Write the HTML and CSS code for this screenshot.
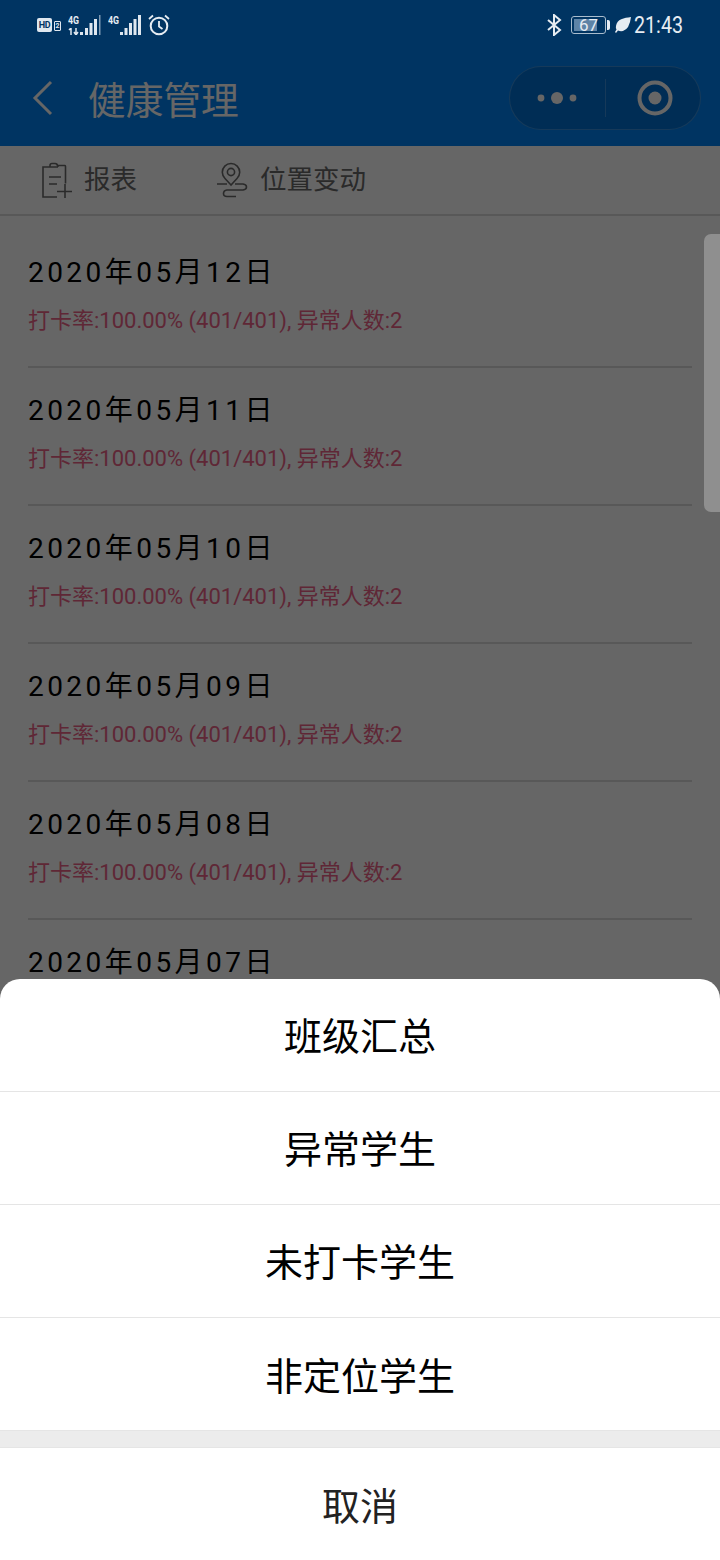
FILE: index.html
```html
<!DOCTYPE html>
<html lang="zh-CN">
<head>
<meta charset="utf-8">
<title>健康管理</title>
<link rel="stylesheet" href="styles.css">
</head>
<body>
<div class="page">
  <header class="nav">
    <svg class="back" width="24" height="36" viewBox="0 0 24 36"><path d="M20 2 4 18l16 16" fill="none" stroke="#fff" stroke-width="3"/></svg>
    <h1 class="title">健康管理</h1>
    <div class="capsule">
      <svg class="more" width="40" height="14" viewBox="0 0 40 14"><circle cx="4" cy="7" r="3.4" fill="#fff"/><circle cx="20" cy="7" r="6" fill="#fff"/><circle cx="36" cy="7" r="3.4" fill="#fff"/></svg>
      <span class="capsule-sep"></span>
      <svg class="target" width="36" height="36" viewBox="0 0 36 36"><circle cx="18" cy="18" r="15.5" fill="none" stroke="#fff" stroke-width="4"/><circle cx="18" cy="18" r="6.5" fill="#fff"/></svg>
    </div>
  </header>

  <nav class="tools">
    <div class="tool tool-report">
      <svg width="32" height="36" viewBox="0 0 32 36" fill="none" stroke="#6a6a6a" stroke-width="1.6">
        <path d="M9 5H2v30h14M9 5V3.500q0-2 2-2h2.500q1.500 0 2 .5l1 1.500h7.500q.5 0 .5 1v17M13.500 1.500q3-.5 3.500 3.500M9 5h8"/>
        <path d="M8 15h12M8 22h8M16 29.500h15M24 22v14"/>
      </svg>
      <span>报表</span>
    </div>
    <div class="tool tool-move">
      <svg width="32" height="36" viewBox="0 0 32 36" fill="none" stroke="#6a6a6a" stroke-width="1.6">
        <path d="M14 23 8 16.500a8.700 8.700 0 1 1 12 0Z"/>
        <circle cx="14" cy="10" r="3.600"/>
        <path d="M0 22h10M18 22h8q3.500.5 3.500 3t-3.500 3H10q-3.500.5-3.500 3.500t3.500 3h9"/>
      </svg>
      <span>位置变动</span>
    </div>
  </nav>

  <main class="list">
    <section class="row"><div class="date">2020年05月12日</div><div class="stat">打卡率:100.00% (401/401), 异常人数:2</div></section>
    <section class="row"><div class="date">2020年05月11日</div><div class="stat">打卡率:100.00% (401/401), 异常人数:2</div></section>
    <section class="row"><div class="date">2020年05月10日</div><div class="stat">打卡率:100.00% (401/401), 异常人数:2</div></section>
    <section class="row"><div class="date">2020年05月09日</div><div class="stat">打卡率:100.00% (401/401), 异常人数:2</div></section>
    <section class="row"><div class="date">2020年05月08日</div><div class="stat">打卡率:100.00% (401/401), 异常人数:2</div></section>
    <section class="row"><div class="date">2020年05月07日</div></section>
  </main>

  <div class="mask"></div>
  <div class="scroll-thumb"></div>

  <div class="status">
    <div class="status-left">
      <div class="hd">HD</div>
      <div class="sim">2</div>
      <div class="net">
        <span class="net-label">4G</span>
        <svg class="arrows" width="11" height="7" viewBox="0 0 11 7"><path d="M3 0v7M1 2l2-2M8 0v7M6 4l2 3 2-3" fill="none" stroke="#dfe7ef" stroke-width="1.500"/></svg>
      </div>
      <svg class="bars" width="22" height="20" viewBox="0 0 22 20"><path d="M1 17h3v3H1zM6 13h3v7H6zM10.500 8h3v12h-3zM15 4h3v16h-3z" fill="#dfe7ef"/><rect x="20" y="0" width="1.500" height="20" fill="#7f9ab3"/></svg>
      <span class="net-label net-two">4G</span>
      <svg class="bars-two" width="21" height="20" viewBox="0 0 21 20"><path d="M0 17h3v3H0zM4.500 13h3v7h-3zM9 8h3v12H9zM13.500 4h3v16h-3zM18 0h3v20h-3z" fill="#dfe7ef"/></svg>
      <svg class="alarm" width="22" height="22" viewBox="0 0 22 22" fill="none" stroke="#e6ecf2"><circle cx="11" cy="12" r="8.300" stroke-width="2"/><path d="M11 7v5.500l3.500 2.500" stroke-width="1.800"/><path d="M1 5l4-3.500M21 5l-4-3.500" stroke-width="1.800"/></svg>
    </div>
    <div class="status-right">
      <svg width="15" height="22" viewBox="0 0 15 22" fill="none" stroke="#e6ecf2" stroke-width="2"><path d="M1 6l12 10-6 5V1l6 5L1 16"/></svg>
      <div class="battery"><span class="battery-fill"></span><span class="battery-num">67</span></div>
      <span class="battery-nub"></span>
      <svg class="leaf" width="16" height="16" viewBox="0 0 16 16"><path d="M16 0C9 1 2 2 1 9q-.5 2 .5 3.500L0 15l1 1 2-2.500Q5 14.500 8 14 14.500 12 16 0Z" fill="#e6ecf2"/></svg>
      <span class="clock">21:43</span>
    </div>
  </div>

  <div class="sheet">
    <div class="sheet-item">班级汇总</div>
    <div class="sheet-item">异常学生</div>
    <div class="sheet-item">未打卡学生</div>
    <div class="sheet-item sheet-item-last">非定位学生</div>
    <div class="sheet-gap"></div>
    <div class="sheet-cancel">取消</div>
  </div>
</div>
</body>
</html>
```

FILE: styles.css
```css
* { box-sizing: border-box; margin: 0; padding: 0; }
html, body { width: 720px; height: 1560px; overflow: hidden; background: #fff; }
body { font-family: Roboto, "Noto Sans CJK SC", sans-serif; color: #000; }
.page { position: relative; width: 720px; height: 1560px; overflow: hidden; display: flex; flex-direction: column; }

.nav { flex: none; height: 146px; background: #0082f5; display: flex; align-items: center; padding: 50px 19px 0 31px; color: #fff; }
.back { flex: none; }
.title { flex: 1; font-size: 37.7px; font-weight: 400; line-height: 50px; margin: 6px 0 0 33px; color: #fff; }
.capsule { flex: none; width: 192px; height: 64px; border-radius: 32px; background: rgba(0,0,0,.13); border: 1px solid rgba(255,255,255,.22); display: flex; align-items: center; }
.more { flex: none; margin-left: 27px; }
.capsule-sep { flex: none; width: 1px; height: 38px; margin-left: 28px; background: rgba(255,255,255,.22); }
.target { flex: none; margin-left: 31px; }

.tools { flex: none; height: 70px; display: flex; align-items: center; border-bottom: 2px solid #ddd; padding-left: 41px; color: #6a6a6a; font-size: 26.5px; }
.tool { display: flex; align-items: center; }
.tool span { line-height: 36px; margin-bottom: 1px; }
.tool-report svg { margin-right: 11px; }
.tool-move { margin-left: 80px; }
.tool-move svg { margin-right: 11px; }

.list { flex: 1; overflow: hidden; padding-top: 14px; }
.row { height: 138px; margin: 0 28px; padding-top: 24px; border-bottom: 2px solid #ddd; }
.row:last-child { border-bottom: 0; }
.date { font-size: 28px; line-height: 38px; letter-spacing: 3.45px; color: #000; white-space: nowrap; }
.stat { font-size: 22px; line-height: 34px; margin-top: 12px; color: #ee6388; white-space: nowrap; }

.mask { position: absolute; inset: 0; background: rgba(0,0,0,.6); }
.scroll-thumb { position: absolute; right: 0; top: 234px; width: 16px; height: 278px; background: #8f8f8f; border-radius: 7px 0 0 7px; }

.status { position: absolute; left: 0; right: 0; top: 0; height: 50px; display: flex; align-items: center; justify-content: space-between; padding: 0 38px 0 37px; color: #e6ecf2; }
.status-left, .status-right { display: flex; align-items: center; }
.hd { width: 15px; height: 14px; background: #dfe7ef; border-radius: 2px; color: #003462; font-size: 9px; line-height: 14px; font-weight: 700; text-align: center; letter-spacing: -.3px; }
.sim { width: 7px; height: 10px; margin: 1px 0 0 2px; border: 1px solid #dfe7ef; border-radius: 1px; font-size: 7px; line-height: 8px; font-weight: 700; text-align: center; color: #dfe7ef; }
.net { flex: none; width: 11px; height: 20px; display: flex; flex-direction: column; align-items: flex-start; justify-content: space-between; margin-left: 7px; }
.net-label { font-size: 11px; line-height: 11px; font-weight: 700; color: #e6ecf2; white-space: nowrap; transform: scaleX(.8); transform-origin: left center; }
.arrows { flex: none; }
.bars { flex: none; }
.net-two { flex: none; width: 11px; margin-left: 7px; margin-bottom: 9px; }
.bars-two { flex: none; margin-left: 1px; }
.alarm { flex: none; margin-left: 7px; }
.battery { position: relative; width: 35px; height: 18px; margin-left: 9px; border: 1px solid #a9bccd; border-radius: 3px; display: flex; align-items: center; justify-content: center; overflow: hidden; }
.battery-fill { position: absolute; left: 2px; top: 2px; bottom: 2px; width: 23px; background: #5e83a6; }
.battery-num { position: relative; font-size: 17px; line-height: 18px; color: #e6ecf2; }
.battery-nub { width: 3px; height: 10px; margin-left: 1px; background: #e6ecf2; border-radius: 0 2px 2px 0; }
.leaf { margin-left: 5px; }
.clock { font-size: 24px; line-height: 28px; margin-left: 3px; width: 48px; white-space: nowrap; transform: scaleX(.82); transform-origin: left center; color: #e6ecf2; }

.sheet { position: absolute; left: 0; right: 0; bottom: 0; height: 581px; background: #fff; border-radius: 20px 20px 0 0; overflow: hidden; display: flex; flex-direction: column; }
.sheet-item { flex: none; height: 113px; padding-bottom: 4px; display: flex; align-items: center; justify-content: center; font-size: 38px; color: #000; border-bottom: 1px solid #e5e5e5; }
.sheet-item-last { height: 112px; border-bottom: 0; padding-bottom: 2px; }
.sheet-gap { flex: none; height: 18px; background: #ececec; border-top: 1px solid #e5e5e5; border-bottom: 1px solid #e5e5e5; }
.sheet-cancel { flex: 1; padding-bottom: 2px; display: flex; align-items: center; justify-content: center; font-size: 38px; color: #222; }
```
